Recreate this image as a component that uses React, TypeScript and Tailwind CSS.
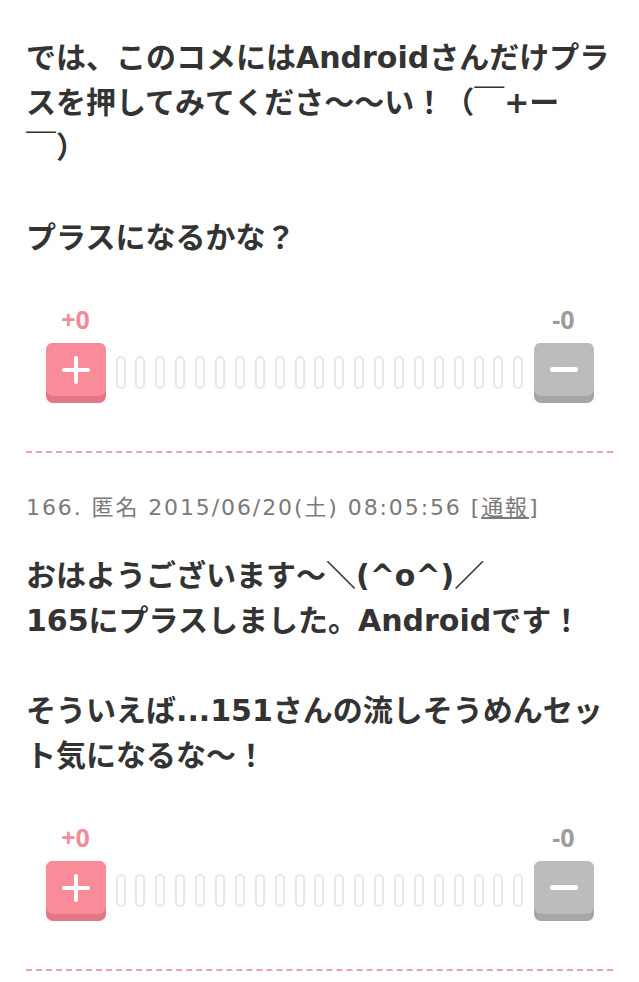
import React from "react";

const bodyFont = {
  fontFamily: '"DejaVu Sans", "Noto Sans CJK JP", sans-serif',
};

const Bars: React.FC = () => (
  <div className="flex flex-1 items-start justify-between px-[10px] pt-[13px]">
    {Array.from({ length: 21 }).map((_, i) => (
      <div
        key={i}
        className="h-[33px] w-[10px] rounded-[5px] border-2 border-[#e8e8e8] bg-white"
      />
    ))}
  </div>
);

const VoteBar: React.FC = () => (
  <div className="mx-auto mt-[46px] w-[548px]">
    <div className="flex justify-between font-['Noto_Sans',sans-serif] text-[25px] font-bold leading-[26px]">
      <span className="w-[60px] text-center text-[#f38b9b]">+0</span>
      <span className="w-[60px] text-center text-[#9c9c9c]">-0</span>
    </div>
    <div className="mt-[11px] flex items-start">
      <div className="h-[60px] w-[60px] rounded-[7px] bg-[#e27886]">
        <div className="relative flex h-[53px] w-[60px] items-center justify-center rounded-[7px] bg-[#fa8c9a]">
          <div className="absolute h-[4px] w-[28px] rounded-sm bg-white" />
          <div className="absolute h-[28px] w-[4px] rounded-sm bg-white" />
        </div>
      </div>
      <Bars />
      <div className="h-[60px] w-[60px] rounded-[7px] bg-[#a6a6a6]">
        <div className="flex h-[53px] w-[60px] items-center justify-center rounded-[7px] bg-[#bcbcbc]">
          <div className="h-[5px] w-[28px] rounded-sm bg-white" />
        </div>
      </div>
    </div>
  </div>
);

const Divider: React.FC = () => (
  <div className="mt-[48px] border-t-2 border-dashed border-[#e8a2b6]" />
);

export default function App() {
  return (
    <div className="min-h-[982px] bg-white px-[26px] pt-[35px]" style={bodyFont}>
      <div className="whitespace-nowrap text-[30px] font-bold leading-[45px] text-[#333333]">
        では、このコメにはAndroidさんだけプラ
        <br />
        スを押してみてくださ〜〜い！（￣+ー
        <br />
        ￣）
        <br />
        <br />
        プラスになるかな？
      </div>
      <VoteBar />
      <Divider />

      <div className="mt-[40px] text-[22px] leading-[30px] tracking-[1.9px] text-[#7a7a7a]">
        166. 匿名 2015/06/20(土) 08:05:56 [<span className="underline">通報</span>]
      </div>
      <div className="mt-[30px] whitespace-nowrap text-[30px] font-bold leading-[45px] text-[#333333]">
        おはようございます〜＼(^o^)／
        <br />
        165にプラスしました。Androidです！
        <br />
        <br />
        そういえば...151さんの流しそうめんセッ
        <br />
        ト気になるな〜！
      </div>
      <VoteBar />
      <Divider />
    </div>
  );
}
